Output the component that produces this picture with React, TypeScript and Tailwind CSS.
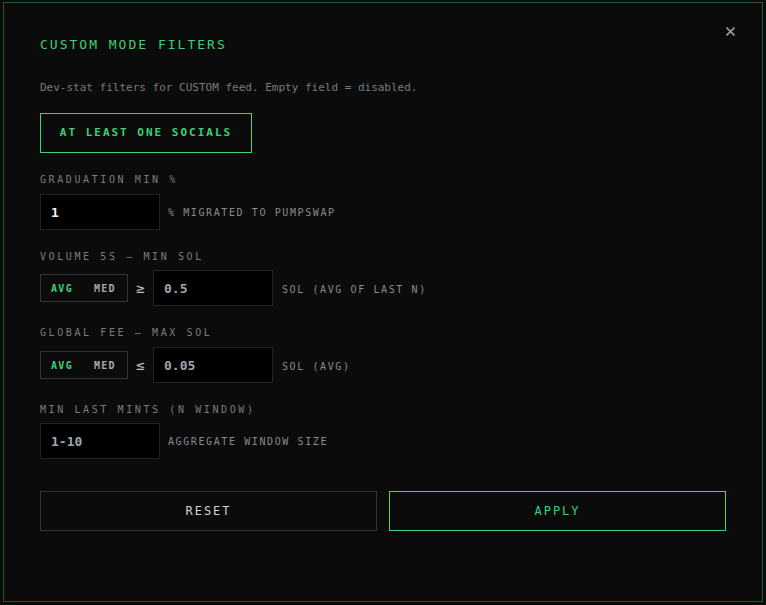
import React, { useState } from "react";

const mono = { fontFamily: '"DejaVu Sans Mono", "Liberation Mono", monospace' };

function Toggle({ value, onChange }: { value: "avg" | "med"; onChange: (v: "avg" | "med") => void }) {
  return (
    <div className="flex h-[28px] w-[88px] items-center gap-[21px] border border-[#333] pl-[10px]">
      <button
        onClick={() => onChange("avg")}
        className={`text-[10px] font-bold tracking-[1.3px] ${value === "avg" ? "text-[#3fcf76]" : "text-[#a8a8a8]"}`}
      >
        AVG
      </button>
      <button
        onClick={() => onChange("med")}
        className={`text-[10px] font-bold tracking-[1.3px] ${value === "med" ? "text-[#3fcf76]" : "text-[#a8a8a8]"}`}
      >
        MED
      </button>
    </div>
  );
}

function Field({ value, placeholder, white }: { value?: string; placeholder?: string; white?: boolean }) {
  return (
    <input
      defaultValue={value}
      placeholder={placeholder}
      style={mono}
      className={`h-[36px] w-[120px] border border-[#222] bg-black px-[10px] text-[13px] font-bold outline-none placeholder:text-[#a0a4ae] ${
        white ? "text-[#f2f2f2]" : "text-[#a0a4ae]"
      }`}
    />
  );
}

function Label({ children }: { children: React.ReactNode }) {
  return <div className="h-[13px] text-[10px] leading-[14px] tracking-[2.6px] text-[#7b7b7b]">{children}</div>;
}

function Hint({ children }: { children: React.ReactNode }) {
  return <span className="text-[10px] tracking-[1.6px] text-[#8a8a8a]">{children}</span>;
}

export default function App() {
  const [vol, setVol] = useState<"avg" | "med">("avg");
  const [fee, setFee] = useState<"avg" | "med">("avg");

  return (
    <div className="h-[605px] w-[766px] bg-[#0a0a0a] pl-[3px] pt-[2px]" style={mono}>
      <div className="relative flex h-[600px] w-[760px] flex-col border border-[#1f5a2f] bg-[#0b0b0b] pl-[36px] pr-[36px] pt-[34px]">
        <button className="absolute right-[27px] top-[24px] h-[9px] w-[9px]">
          <svg viewBox="0 0 9 9" width="9" height="9" stroke="#9a9a9a" strokeWidth="1.6">
            <path d="M0.5 0.5 L8.5 8.5 M8.5 0.5 L0.5 8.5" />
          </svg>
        </button>

        <h2 className="h-[16px] text-[13px] leading-[16px] tracking-[2px] text-[#3fcf76]">CUSTOM MODE FILTERS</h2>

        <p className="mt-[28px] h-[14px] text-[11px] leading-[14px] text-[#7a7a7a]">
          Dev-stat filters for CUSTOM feed. Empty field = disabled.
        </p>

        <button className="mt-[18px] h-[40px] w-[212px] border border-[#3dd47e] text-[11px] font-bold tracking-[2px] text-[#3fcf76]">
          AT LEAST ONE SOCIALS
        </button>

        <div className="mt-[20px]">
          <Label>GRADUATION MIN %</Label>
          <div className="mt-[8px] flex items-center gap-[8px]">
            <Field value="1" white />
            <Hint>% MIGRATED TO PUMPSWAP</Hint>
          </div>
        </div>

        <div className="mt-[20px]">
          <Label>VOLUME 5S — MIN SOL</Label>
          <div className="mt-[7px] flex items-center gap-[8px]">
            <Toggle value={vol} onChange={setVol} />
            <span className="w-[9px] text-[14px] text-[#bdbdbd]">≥</span>
            <Field placeholder="0.5" />
            <span className="ml-[1px]">
              <Hint>SOL (AVG OF LAST N)</Hint>
            </span>
          </div>
        </div>

        <div className="mt-[20px]">
          <Label>GLOBAL FEE — MAX SOL</Label>
          <div className="mt-[8px] flex items-center gap-[8px]">
            <Toggle value={fee} onChange={setFee} />
            <span className="w-[9px] text-[14px] text-[#bdbdbd]">≤</span>
            <Field placeholder="0.05" />
            <span className="ml-[1px]">
              <Hint>SOL (AVG)</Hint>
            </span>
          </div>
        </div>

        <div className="mt-[20px]">
          <Label>MIN LAST MINTS (N WINDOW)</Label>
          <div className="mt-[7px] flex items-center gap-[8px]">
            <Field placeholder="1-10" />
            <Hint>AGGREGATE WINDOW SIZE</Hint>
          </div>
        </div>

        <div className="mt-[32px] flex gap-[12px]">
          <button className="h-[40px] flex-1 border border-[#333] text-[12px] tracking-[2px] text-[#d0d0d0]">RESET</button>
          <button className="h-[40px] flex-1 border border-[#3dd47e] text-[12px] tracking-[2px] text-[#3fcf76]">APPLY</button>
        </div>
      </div>
    </div>
  );
}
